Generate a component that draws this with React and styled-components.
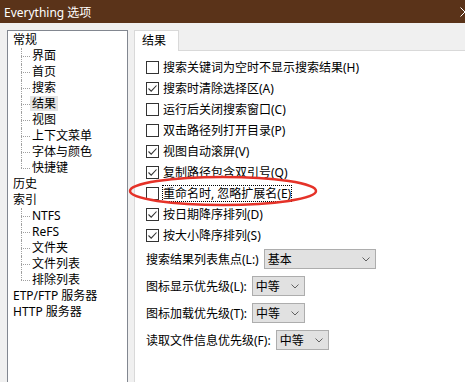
import React from "react";
import styled, { createGlobalStyle } from "styled-components";

const GlobalStyle = createGlobalStyle`
  html, body {
    margin: 0;
    padding: 0;
    background: #f0f0f0;
  }
  body {
    font-family: "Noto Sans", "Noto Sans CJK SC", sans-serif;
    font-size: 12px;
    color: #000;
  }
`;

const tree = [
  {
    label: "常规",
    children: ["界面", "首页", "搜索", "结果", "视图", "上下文菜单", "字体与颜色", "快捷键"],
  },
  { label: "历史" },
  { label: "索引", children: ["NTFS", "ReFS", "文件夹", "文件列表", "排除列表"] },
  { label: "ETP/FTP 服务器" },
  { label: "HTTP 服务器" },
];

const options = [
  { text: "搜索关键词为空时不显示搜索结果(H)", checked: false },
  { text: "搜索时清除选择区(A)", checked: true },
  { text: "运行后关闭搜索窗口(C)", checked: false },
  { text: "双击路径列打开目录(P)", checked: false },
  { text: "视图自动滚屏(V)", checked: true },
  { text: "复制路径包含双引号(Q)", checked: true },
  { text: "重命名时, 忽略扩展名(E)", checked: false, focused: true },
  { text: "按日期降序排列(D)", checked: true },
  { text: "按大小降序排列(S)", checked: true },
];

const selects = [
  { label: "搜索结果列表焦点(L:)", value: "基本", width: 112 },
  { label: "图标显示优先级(L):", value: "中等", width: 53 },
  { label: "图标加载优先级(T):", value: "中等", width: 53 },
  { label: "读取文件信息优先级(F):", value: "中等", width: 53 },
];

const Window = styled.div`
  position: relative;
  width: 465px;
  height: 382px;
  overflow: hidden;
  display: flex;
  flex-direction: column;
  background: #f0f0f0;
`;

const TitleBar = styled.div`
  height: 23px;
  flex-shrink: 0;
  display: flex;
  align-items: center;
  padding-left: 4px;
  background: #5a3319;
  color: #fff;
  font-size: 12px;
`;

const CloseIcon = styled.svg`
  margin-left: auto;
  margin-right: -5px;
  flex-shrink: 0;
`;

const Body = styled.div`
  display: flex;
  gap: 6px;
  padding: 7px 0 0 7px;
  height: 380px;
  flex-shrink: 0;
`;

const TreePanel = styled.div`
  width: 121px;
  flex-shrink: 0;
  box-sizing: border-box;
  border: 1px solid #828790;
  background: #fff;
  padding: 1px 0 0 0;
`;

const TreeRoot = styled.div`
  height: 16px;
  line-height: 16px;
  padding-left: 5px;
  white-space: nowrap;
`;

const TreeChild = styled.div`
  position: relative;
  height: 16px;
  line-height: 16px;
  padding-left: 22px;
  white-space: nowrap;

  &::before {
    content: "";
    position: absolute;
    left: 13px;
    top: 8px;
    width: 9px;
    border-top: 1px dotted #a0a0a0;
  }

  &::after {
    content: "";
    position: absolute;
    left: 13px;
    top: 0;
    height: ${(p) => (p.$last ? "8px" : "16px")};
    border-left: 1px dotted #a0a0a0;
  }
`;

const TreeLabel = styled.span`
  display: inline-block;
  padding: 0 2px;
  height: 15px;
  line-height: 16px;
  background: ${(p) => (p.$selected ? "#e5e5e5" : "transparent")};
`;

const RightColumn = styled.div`
  width: 345px;
  flex-shrink: 0;
  display: flex;
  flex-direction: column;
`;

const TabStrip = styled.div`
  display: flex;
  height: 20px;
`;

const Tab = styled.div`
  position: relative;
  z-index: 1;
  box-sizing: border-box;
  width: 45px;
  height: 21px;
  padding-left: 7px;
  line-height: 19px;
  background: #fff;
  border: 1px solid #d9d9d9;
  border-bottom: none;
`;

const TabPanel = styled.div`
  flex: 1;
  background: #fff;
  border: 1px solid #d9d9d9;
  padding: 6px 11px;
  display: flex;
  flex-direction: column;
`;

const OptionRow = styled.div`
  display: flex;
  align-items: center;
  gap: 3px;
  height: 21px;
  white-space: nowrap;
`;

const Box = styled.span`
  width: 13px;
  height: 13px;
  box-sizing: border-box;
  border: 1px solid #333;
  background: #fff;
  display: flex;
  align-items: center;
  justify-content: center;
  flex-shrink: 0;
`;

const OptionText = styled.span`
  padding: 0 1px;
  line-height: 17px;
  outline: ${(p) => (p.$focused ? "1px dotted #000" : "none")};
  outline-offset: -1px;
`;

const SelectList = styled.div`
  display: flex;
  flex-direction: column;
  gap: 7px;
  margin-top: 3px;
`;

const SelectRow = styled.div`
  display: flex;
  align-items: center;
  gap: 5px;
  white-space: nowrap;
`;

const SelectBox = styled.div`
  box-sizing: border-box;
  height: 20px;
  width: ${(p) => p.$width}px;
  padding: 0 5px 0 3px;
  background: #e1e1e1;
  border: 1px solid #adadad;
  display: flex;
  align-items: center;
  justify-content: space-between;
`;

const Annotation = styled.svg`
  position: absolute;
  left: 128px;
  top: 175px;
  pointer-events: none;
`;

const Check = () => (
  <svg width="11" height="11" viewBox="0 0 11 11">
    <path d="M1.5 5.5 L4.2 8.2 L9.5 2.5" fill="none" stroke="#333" strokeWidth="1.1" />
  </svg>
);

const Chevron = () => (
  <svg width="8" height="5" viewBox="0 0 8 5">
    <path d="M0.5 0.5 L4 4 L7.5 0.5" fill="none" stroke="#606060" strokeWidth="1" />
  </svg>
);

export default function App() {
  return (
    <>
      <GlobalStyle />
      <Window>
        <TitleBar>
          <span>Everything 选项</span>
          <CloseIcon width="10" height="10" viewBox="0 0 10 10">
            <path d="M0.5 0.5 L9.5 9.5 M9.5 0.5 L0.5 9.5" stroke="#fff" strokeWidth="1" />
          </CloseIcon>
        </TitleBar>
        <Body>
          <TreePanel>
            {tree.map((node) => (
              <React.Fragment key={node.label}>
                <TreeRoot>{node.label}</TreeRoot>
                {(node.children || []).map((child, i, arr) => (
                  <TreeChild key={child} $last={i === arr.length - 1}>
                    <TreeLabel $selected={child === "结果"}>{child}</TreeLabel>
                  </TreeChild>
                ))}
              </React.Fragment>
            ))}
          </TreePanel>
          <RightColumn>
            <TabStrip>
              <Tab>结果</Tab>
            </TabStrip>
            <TabPanel>
              {options.map((opt) => (
                <OptionRow key={opt.text}>
                  <Box>{opt.checked && <Check />}</Box>
                  <OptionText $focused={opt.focused}>{opt.text}</OptionText>
                </OptionRow>
              ))}
              <SelectList>
                {selects.map((s) => (
                  <SelectRow key={s.label}>
                    <span>{s.label}</span>
                    <SelectBox $width={s.width}>
                      <span>{s.value}</span>
                      <Chevron />
                    </SelectBox>
                  </SelectRow>
                ))}
              </SelectList>
            </TabPanel>
          </RightColumn>
        </Body>
        <Annotation width="192" height="34" viewBox="0 0 192 34">
          <ellipse cx="95" cy="16" rx="93" ry="14" fill="none" stroke="#e53228" strokeWidth="2.5" />
        </Annotation>
      </Window>
    </>
  );
}
